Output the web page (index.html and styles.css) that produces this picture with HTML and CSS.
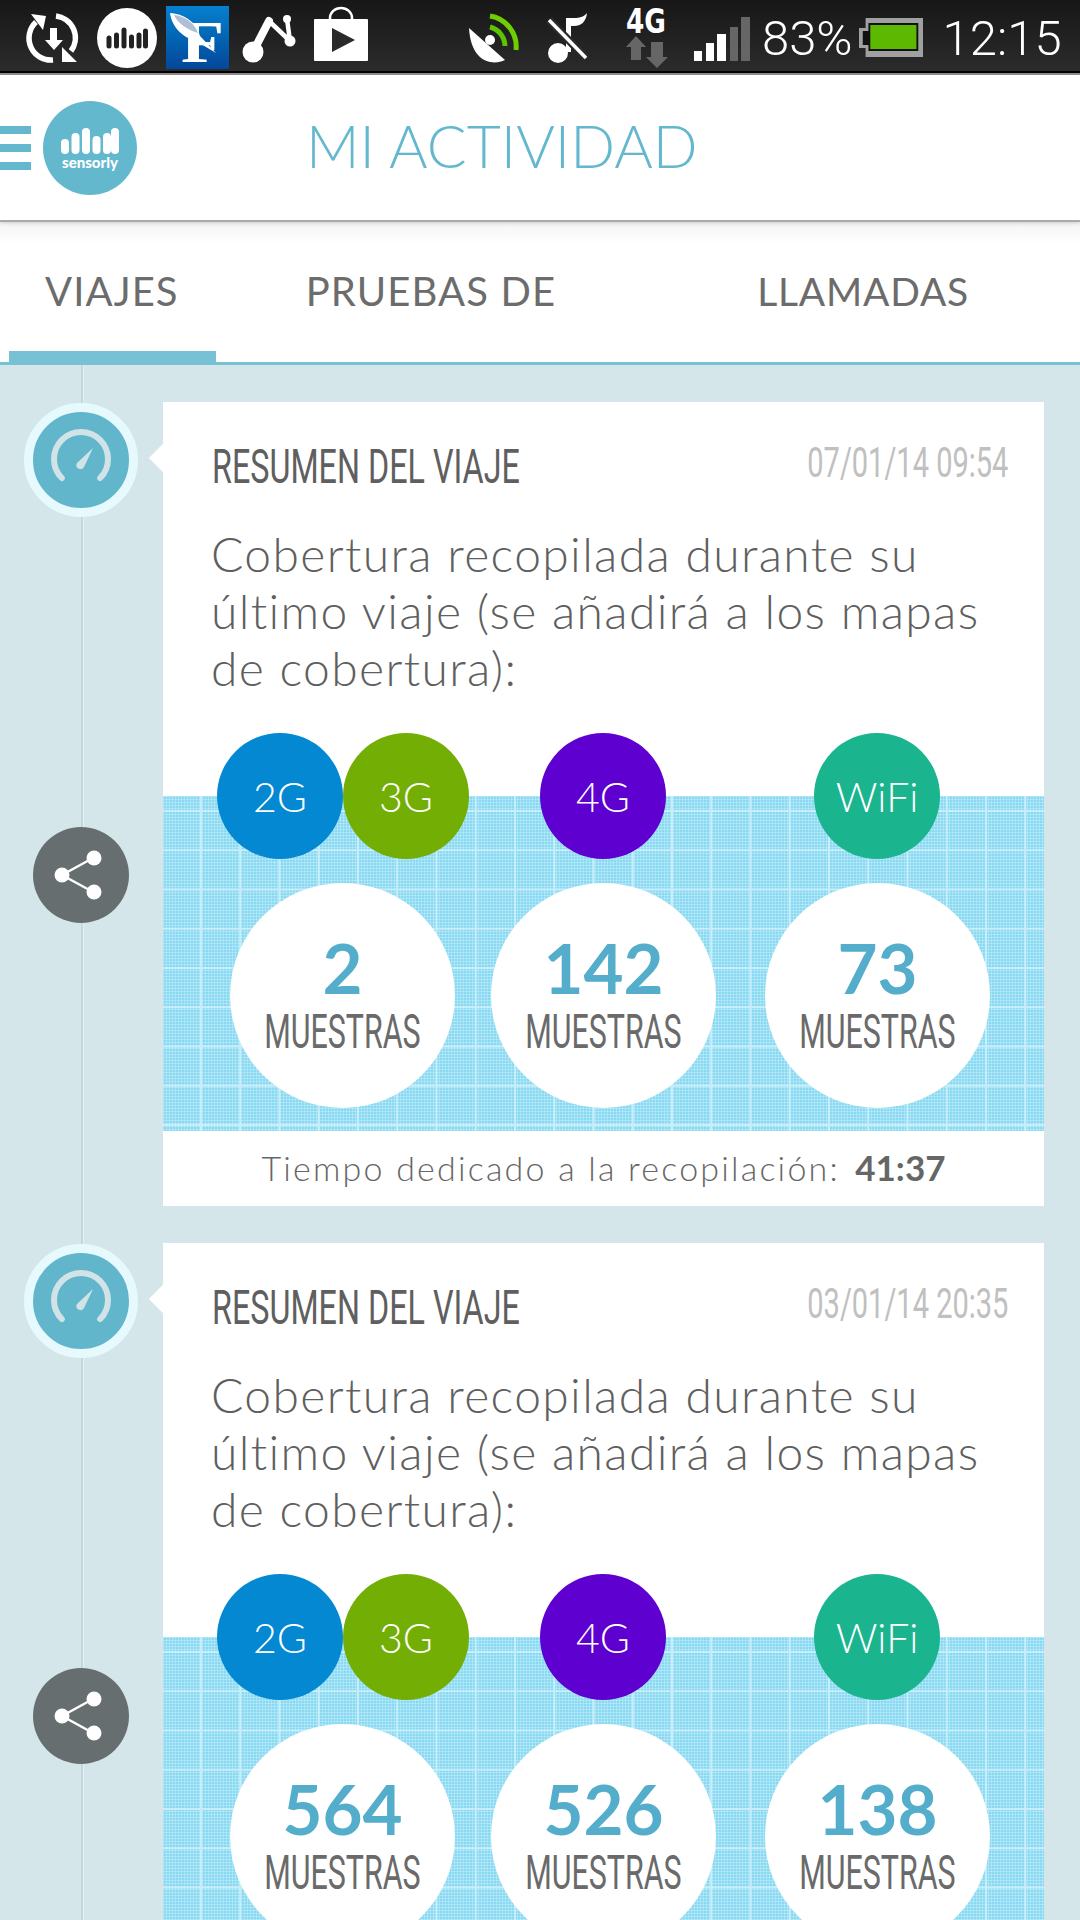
FILE: index.html
```html
<!DOCTYPE html>
<html lang="es">
<head>
  <meta charset="UTF-8">
  <title>Mi actividad</title>
  <link rel="stylesheet" href="styles.css">
</head>
<body>

<div class="status">
  <svg class="st st-sync" width="50" height="50" viewBox="0 0 50 50"><path d="M25 47A22 22 0 0 1 8 9" fill="none" stroke="#fff" stroke-width="5.5"/><path d="M28 3a22 22 0 0 1 15 35" fill="none" stroke="#fff" stroke-width="5.5"/><path d="M3 1l15 2-3 14zM34 34l15 15-15 0z" fill="#fff"/><path d="M22 15h7v12h6L26 37 17 27h5z" fill="#fff"/></svg>
  <svg class="st st-radio" width="60" height="60" viewBox="0 0 60 60"><circle cx="30" cy="30" r="30" fill="#fff"/><path d="M12 30v8M19.500 27v11M27 22v16M34.500 29v9M42 27v11M48.500 23v15" stroke="#222" stroke-width="5" stroke-linecap="round"/></svg>
  <svg class="st st-fig" width="63" height="63" viewBox="0 0 63 63"><defs><linearGradient id="fig" x1="0" y1="0" x2="0" y2="1"><stop offset="0" stop-color="#0680cf"/><stop offset="1" stop-color="#02489a"/></linearGradient></defs><rect width="63" height="63" fill="url(#fig)"/><text x="15" y="56" class="fig-f" textLength="43" lengthAdjust="spacingAndGlyphs">F</text><path d="M4 7c14 1 27 9 30 23l16 17-20-12C18 32 6 22 4 7z" fill="#fff"/><path d="M8 9c10 1 20 7 24 18C22 24 12 18 8 9z" fill="#aebfd6"/></svg>
  <svg class="st st-app" width="54" height="48" viewBox="0 0 54 48"><path d="M10 37L26 6" stroke="#fff" stroke-width="8" stroke-linecap="round"/><path d="M26 6l21 20M44 4l3 22" stroke="#fff" stroke-width="4.500"/><circle cx="10" cy="37" r="10.500" fill="#fff"/><circle cx="47" cy="26" r="5.500" fill="#fff"/><circle cx="44" cy="4" r="4" fill="#fff"/></svg>
  <svg class="st st-bag" width="54" height="54" viewBox="0 0 54 54"><path d="M16 14V11a11 10 0 0 1 22 0v3" fill="none" stroke="#fff" stroke-width="2.500"/><rect y="12" width="54" height="42" rx="1" fill="#fff"/><path d="M18 21l23 12-23 12z" fill="#2a2a2a"/></svg>
  <svg class="st st-dish" width="50" height="50" viewBox="0 0 50 50"><path d="M0 15L36 47C24 53 2 50 0 15z" fill="#fff"/><circle cx="21" cy="27" r="5" fill="#fff"/><path d="M21 14A20 20 0 0 1 36 33" fill="none" stroke="#5cc400" stroke-width="5"/><path d="M21 3A31 31 0 0 1 47 37" fill="none" stroke="#6ed000" stroke-width="5"/></svg>
  <svg class="st st-note" width="39" height="50" viewBox="0 0 39 50"><path d="M18 5h8c6 0 11-2 13-5-1 9-6 13-13 13h-3v26h-5z" fill="#fff"/><circle cx="10" cy="40" r="10" fill="#fff"/><path d="M1 7l37 38" stroke="#2a2a2a" stroke-width="8"/><path d="M1 7l37 38" stroke="#fff" stroke-width="3.500"/></svg>
  <svg class="st st-net" width="42" height="60" viewBox="0 0 42 60"><text x="0" y="25" class="net-g" textLength="40" lengthAdjust="spacingAndGlyphs">4G</text><path d="M10 28l10 11h-5v13H5V39H0zM25 34h12v15h5L31 60 20 49h5z" fill="#666"/></svg>
  <svg class="st st-bars" width="56" height="44" viewBox="0 0 56 44"><rect y="34" width="8" height="10" fill="#fff"/><rect x="12" y="26" width="8" height="18" fill="#fff"/><rect x="23" y="17" width="9" height="27" fill="#fff"/><rect x="36" y="10" width="8" height="34" fill="#666"/><rect x="47" width="9" height="44" fill="#666"/></svg>
  <span class="st-txt st-pct">83%</span>
  <svg class="st st-batt" width="64" height="39" viewBox="0 0 68 39" preserveAspectRatio="none"><path d="M7 0h61v39H7v-9H0V10h7z" fill="#a0a0a0"/><path d="M10 5h53v28H10v-6H4V13h6z" fill="#111"/><rect x="12" y="7" width="49" height="24" fill="#5cb800"/></svg>
  <span class="st-txt st-time">12:15</span>
</div>

<header class="topbar">
  <div class="burger"><i></i><i></i><i></i></div>
  <div class="logo">
    <svg width="60" height="28" viewBox="0 0 60 28"><path d="M5 16v7M15.500 10v13M26 5v18M36.500 13v10M47 10v13M55 5v18" stroke="#fff" stroke-width="8" stroke-linecap="round"/></svg>
    <span>sensorly</span>
  </div>
  <h1>MI ACTIVIDAD</h1>
</header>

<nav class="tabs">
  <a class="tab tab-on">VIAJES</a>
  <a class="tab tab-2">PRUEBAS DE</a>
  <a class="tab tab-3">LLAMADAS</a>
</nav>

<main class="feed">

  <article class="trip">
    <div class="rail">
      <div class="gauge">
        <svg width="60" height="56" viewBox="0 0 60 56"><path d="M10.800 46A27 27 0 1 1 49.200 46" fill="none" stroke="#d2e3e8" stroke-width="6" stroke-linecap="round"/><path d="M42 16L33 35a4 4 0 0 1-7-4z" fill="#d2e3e8"/></svg>
      </div>
      <div class="share">
        <svg width="56" height="56" viewBox="0 0 56 56"><path d="M9 28L40 11M9 28l31 17" stroke="#fff" stroke-width="2.500"/><circle cx="9" cy="28" r="7.500" fill="#fff"/><circle cx="41" cy="11" r="7.500" fill="#fff"/><circle cx="41" cy="45" r="7.500" fill="#fff"/></svg>
      </div>
    </div>
    <div class="card">
      <div class="card-head">
        <h2>RESUMEN DEL VIAJE</h2>
        <time>07/01/14 09:54</time>
      </div>
      <p class="intro">Cobertura recopilada durante su<br>último viaje (se añadirá a los mapas<br>de cobertura):</p>
      <div class="stats">
        <div class="dot dot-2g">2G</div>
        <div class="dot dot-3g">3G</div>
        <div class="dot dot-4g">4G</div>
        <div class="dot dot-wifi">WiFi</div>
        <div class="big big-a"><b>2</b><span>MUESTRAS</span></div>
        <div class="big big-b"><b>142</b><span>MUESTRAS</span></div>
        <div class="big big-c"><b>73</b><span>MUESTRAS</span></div>
      </div>
      <p class="spent">Tiempo dedicado a la recopilación: <b>41:37</b></p>
    </div>
  </article>

  <article class="trip">
    <div class="rail">
      <div class="gauge">
        <svg width="60" height="56" viewBox="0 0 60 56"><path d="M10.800 46A27 27 0 1 1 49.200 46" fill="none" stroke="#d2e3e8" stroke-width="6" stroke-linecap="round"/><path d="M42 16L33 35a4 4 0 0 1-7-4z" fill="#d2e3e8"/></svg>
      </div>
      <div class="share">
        <svg width="56" height="56" viewBox="0 0 56 56"><path d="M9 28L40 11M9 28l31 17" stroke="#fff" stroke-width="2.500"/><circle cx="9" cy="28" r="7.500" fill="#fff"/><circle cx="41" cy="11" r="7.500" fill="#fff"/><circle cx="41" cy="45" r="7.500" fill="#fff"/></svg>
      </div>
    </div>
    <div class="card">
      <div class="card-head">
        <h2>RESUMEN DEL VIAJE</h2>
        <time>03/01/14 20:35</time>
      </div>
      <p class="intro">Cobertura recopilada durante su<br>último viaje (se añadirá a los mapas<br>de cobertura):</p>
      <div class="stats">
        <div class="dot dot-2g">2G</div>
        <div class="dot dot-3g">3G</div>
        <div class="dot dot-4g">4G</div>
        <div class="dot dot-wifi">WiFi</div>
        <div class="big big-a"><b>564</b><span>MUESTRAS</span></div>
        <div class="big big-b"><b>526</b><span>MUESTRAS</span></div>
        <div class="big big-c"><b>138</b><span>MUESTRAS</span></div>
      </div>
    </div>
  </article>

</main>

</body>
</html>
```

FILE: styles.css
```css
* {
  box-sizing: border-box;
}
html, body {
  margin: 0;
  height: 1920px;
  overflow: hidden;
}
body {
  font-family: 'Lato', sans-serif;
  background: #d4e6ea;
  color: #666;
}

/* status bar */
.status {
  height: 75px;
  display: flex;
  align-items: center;
  background: linear-gradient(#171717, #2b2b2b 71px, #000 71px, #000 73px, #888 73px);
}
.st {
  flex: none;
  overflow: visible;
}
.st-sync { margin-left: 28px; }
.st-radio { margin-left: 19px; }
.st-fig { margin-left: 9px; }
.st-app { margin: 3px 0 0 14px; }
.st-bag { margin: -7px 0 0 17px; }
.st-dish { margin-left: 101px; }
.st-note { margin-left: 29px; }
.st-net { margin-left: 39px; }
.st-bars { margin: 3px 0 0 26px; }
.st-batt { margin-left: 6px; }
.fig-f {
  font-family: 'Liberation Serif', serif;
  font-weight: 700;
  font-size: 60px;
  fill: #fff;
}
.net-g {
  font-family: 'DejaVu Sans', sans-serif;
  font-weight: 700;
  font-size: 34px;
  fill: #fff;
}
.st-txt {
  font-family: 'Roboto', sans-serif;
  color: #fff;
  font-weight: 300;
  font-size: 49px;
  margin-top: 1px;
}
.st-pct {
  margin-left: 12px;
}
.st-time {
  margin-left: 20px;
}

/* header */
.topbar {
  height: 145px;
  background: #fff;
  display: flex;
  align-items: center;
  box-shadow: 0 2px 0 #aaa, 0 3px 4px #ccc;
  position: relative;
  z-index: 1;
}
.burger {
  width: 31px;
  height: 44px;
  display: flex;
  flex-direction: column;
  justify-content: space-between;
  margin-right: 12px;
}
.burger i {
  display: block;
  height: 8px;
  background: #64b8ce;
}
.logo {
  width: 94px;
  height: 94px;
  border-radius: 50%;
  background: #64b8ce;
  display: flex;
  flex-direction: column;
  align-items: center;
  justify-content: center;
  color: #fff;
}
.logo span {
  font-size: 15px;
  font-weight: 900;
  line-height: 14px;
}
.topbar h1 {
  margin: 0 0 5px 169px;
  font-size: 59px;
  font-weight: 300;
  color: #64b8ce;
}

/* tabs */
.tabs {
  height: 145px;
  background: linear-gradient(#f4f4f4, #fff 24px);
  border-bottom: 3px solid #76c1d3;
  display: flex;
  align-items: center;
  font-size: 40px;
  color: #6c6c6c;
  position: relative;
}
.tab {
  letter-spacing: 1.100px;
}
.tab-on {
  margin-left: 45px;
}
.tab-on::after {
  content: "";
  position: absolute;
  left: 9px;
  bottom: -1px;
  width: 207px;
  height: 12px;
  background: #76c1d3;
}
.tab-2 {
  margin-left: 127px;
}
.tab-3 {
  margin-left: 201px;
  letter-spacing: .8px;
  font-size: 39px;
}

/* feed */
.feed {
  padding: 37px 36px 0 0;
}
.trip {
  display: flex;
  margin-bottom: 37px;
}
.rail {
  width: 163px;
  flex: none;
  position: relative;
}
.gauge {
  position: absolute;
  left: 24px;
  top: 1px;
  width: 114px;
  height: 114px;
  border-radius: 50%;
  background: #62b6cc;
  border: 9px solid #e6fafd;
  display: flex;
  align-items: center;
  justify-content: center;
}
.gauge svg {
  overflow: visible;
}
.share {
  position: absolute;
  left: 33px;
  top: 425px;
  width: 96px;
  height: 96px;
  border-radius: 50%;
  background: #666e70;
  display: flex;
  align-items: center;
  justify-content: center;
}
.rail::before {
  content: "";
  position: absolute;
  left: 81px;
  top: -37px;
  bottom: -37px;
  width: 2px;
  background: #c0d8de;
  box-shadow: 1px 0 0 #e4f1f4;
}
.card {
  flex: 1;
  min-width: 0;
  background: #fff;
  position: relative;
}
.card::before {
  content: "";
  position: absolute;
  left: -10px;
  top: 46px;
  width: 20px;
  height: 20px;
  background: #fff;
  transform: rotate(45deg);
}
.card-head {
  display: flex;
  justify-content: space-between;
  align-items: flex-start;
  padding: 40px 36px 0 49px;
  height: 90px;
  position: relative;
}
.card-head h2 {
  margin: 0;
  font-family: 'Roboto', sans-serif;
  font-size: 48px;
  font-weight: 400;
  line-height: 50px;
  white-space: nowrap;
  color: #5f5f5f;
  transform: scaleX(.673);
  transform-origin: left;
}
.card-head time {
  font-family: 'Roboto', sans-serif;
  font-size: 42px;
  color: #c0c0c0;
  line-height: 44px;
  margin-top: -1px;
  white-space: nowrap;
  transform: scaleX(.69);
  transform-origin: right;
}
.intro {
  margin: 0;
  padding: 33px 0 0 48px;
  height: 304px;
  font-size: 48px;
  font-weight: 300;
  line-height: 57px;
  letter-spacing: 1.350px;
  color: #5f5f5f;
}
.stats {
  position: relative;
  height: 335px;
  background-color: #88d9f1;
  background-image:
    linear-gradient(#c8eefa 2px, transparent 2px),
    linear-gradient(90deg, #c8eefa 2px, transparent 2px),
    linear-gradient(rgba(255, 255, 255, .25) 1px, transparent 1px),
    linear-gradient(90deg, rgba(255, 255, 255, .25) 1px, transparent 1px);
  background-size: 39.250px 39.250px, 39.250px 39.250px, 3px 3px, 3px 3px;
  background-position: 0 14px, 37px 0, 0 0, 0 0;
}
.dot {
  position: absolute;
  top: -63px;
  width: 126px;
  height: 126px;
  border-radius: 50%;
  color: #fff;
  font-size: 41px;
  font-weight: 300;
  display: flex;
  align-items: center;
  justify-content: center;
}
.dot-2g { left: 54px; background: #0488d2; }
.dot-3g { left: 180px; background: #72ae04; }
.dot-4g { left: 377px; background: #5e00cf; }
.dot-wifi { left: 651px; background: #1ab48e; }
.big {
  position: absolute;
  top: 87px;
  width: 225px;
  height: 225px;
  padding-top: 54px;
  border-radius: 50%;
  background: #fff;
  display: flex;
  flex-direction: column;
  align-items: center;
}
.big-a { left: 67px; }
.big-b { left: 328px; }
.big-c { left: 602px; }
.big b {
  font-size: 69px;
  font-weight: 700;
  color: #54adca;
  line-height: 62px;
}
.big span {
  font-family: 'Roboto', sans-serif;
  font-size: 48px;
  line-height: 50px;
  margin-top: 8px;
  white-space: nowrap;
  color: #6a6a6a;
  transform: scaleX(.634);
}
.spent {
  margin: 0;
  height: 75px;
  text-align: center;
  font-size: 34px;
  font-weight: 300;
  line-height: 73px;
  letter-spacing: 2.200px;
}
.spent b {
  font-size: 35px;
  font-weight: 700;
  margin-left: 4px;
  letter-spacing: 0;
}
```
